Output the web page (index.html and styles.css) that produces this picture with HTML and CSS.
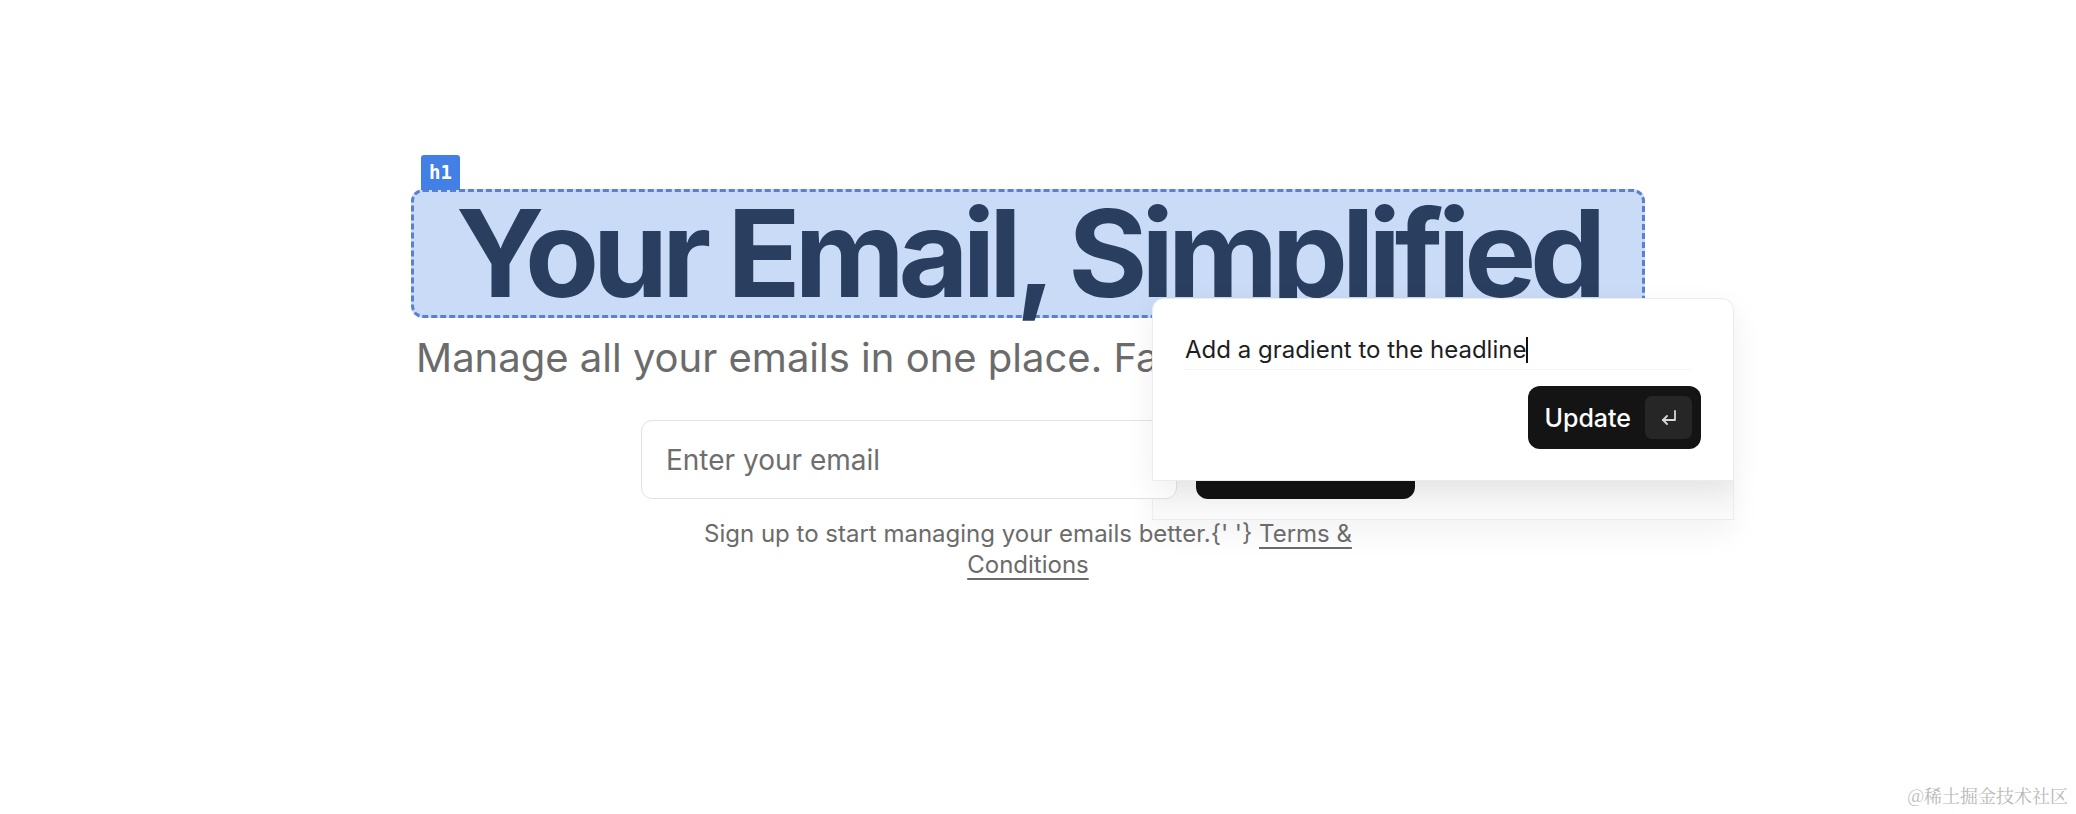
FILE: index.html
```html
<!DOCTYPE html>
<html lang="en">
<head>
<meta charset="utf-8">
<title>Your Email, Simplified</title>
<link rel="stylesheet" href="styles.css">
</head>
<body>
<div class="page">
  <main class="hero">
    <div class="h1-wrap">
      <span class="tag">h1</span>
      <h1 class="headline">Your Email, Simplified</h1>
    </div>
    <p class="subtitle">Manage all your emails in one place. Fast, secure, and easy.</p>
    <form class="signup">
      <input class="email" type="email" placeholder="Enter your email">
      <button class="subscribe" type="button">Get Started</button>
    </form>
    <p class="note">Sign up to start managing your emails better.{' '} <a href="#" class="terms">Terms &amp; Conditions</a></p>
  </main>

  <div class="ghost"></div>
  <div class="popup">
    <div class="prompt">Add a gradient to the headline<span class="caret"></span></div>
    <div class="actions">
      <button class="update" type="button">Update
        <span class="enter">
          <svg width="24" height="24" viewBox="0 0 24 24" fill="none" stroke="currentColor" stroke-width="1.8" stroke-linecap="round" stroke-linejoin="round"><polyline points="18,5 18,14 6,14"/><polyline points="10,10 6,14 10,18"/></svg>
        </span>
      </button>
    </div>
  </div>

  <div class="watermark">@稀土掘金技术社区</div>
</div>
</body>
</html>
```

FILE: styles.css
```css
* { box-sizing: border-box; }

html {
  margin: 0;
  padding: 0;
  background: #ffffff;
}

body {
  margin: 0;
  padding: 0;
  font-family: Inter, "Noto Sans", sans-serif;
  width: 2076px;
  height: 814px;
  overflow: hidden;
}

.page {
  position: relative;
  width: 2076px;
  height: 814px;
  padding: 189px 20px 0 0;
  display: flex;
  justify-content: center;
}

.hero {
  display: flex;
  flex-direction: column;
  align-items: center;
}

.h1-wrap {
  position: relative;
}

.tag {
  position: absolute;
  left: 10px;
  top: -34px;
  width: 39px;
  height: 35px;
  background: #4280e6;
  color: #ffffff;
  border-radius: 3px 3px 0 0;
  font-family: "DejaVu Sans Mono", monospace;
  font-weight: bold;
  font-size: 19px;
  line-height: 35px;
  text-align: center;
}

.headline {
  margin: 0;
  padding: 1px 42px;
  border: 3px dashed #5d7fcf;
  border-radius: 12px;
  background: #c9dbf6;
  color: #2a3e60;
  font-family: Inter, sans-serif;
  font-weight: 700;
  font-size: 121px;
  line-height: 1;
  letter-spacing: -0.052em;
  white-space: nowrap;
}

.subtitle {
  align-self: stretch;
  margin: 15px 0 0;
  padding-left: 5px;
  font-size: 40px;
  line-height: 50px;
  color: #6b6b6b;
  white-space: nowrap;
}

.signup {
  display: flex;
  gap: 19px;
  margin-top: 37px;
}

.email {
  width: 536px;
  height: 79px;
  border: 1.5px solid #e2e2e2;
  border-radius: 11px;
  padding: 0 24px;
  font-family: Inter, sans-serif;
  font-size: 28px;
  color: #333;
  background: #fff;
  outline: none;
}

.email::placeholder {
  color: #6e6e6e;
}

.subscribe {
  width: 219px;
  height: 79px;
  border: none;
  border-radius: 12px;
  background: #121212;
  color: #fff;
  font-family: Inter, sans-serif;
  font-size: 27px;
  font-weight: 500;
}

.note {
  margin: 19px 0 0;
  width: 700px;
  text-align: center;
  font-size: 24px;
  line-height: 31px;
  color: #6b6b6b;
}

.terms {
  color: #6b6b6b;
  text-decoration: underline;
  text-decoration-thickness: 2px;
  text-underline-offset: 5px;
}

.popup {
  position: absolute;
  left: 1152px;
  top: 298px;
  width: 582px;
  height: 183px;
  background: #ffffff;
  border: 1px solid #ececec;
  border-radius: 12px 12px 0 0;
  box-shadow: 0 10px 30px rgba(0, 0, 0, 0.07);
  padding: 36px 32px 0 32px;
}

.ghost {
  position: absolute;
  z-index: -1;
  left: 1152px;
  top: 470px;
  width: 582px;
  height: 50px;
  border-left: 1px solid #ededed;
  border-right: 1px solid #ededed;
  border-bottom: 1.5px solid #ebebeb;
  background: linear-gradient(to bottom, #f3f3f3, #fafafa);
  box-shadow: 0 14px 30px rgba(0, 0, 0, 0.05);
}

.prompt {
  font-size: 24px;
  line-height: 30px;
  color: #1e1e1e;
  padding-bottom: 4px;
  border-bottom: 1px solid #f4f4f4;
  margin-right: 10px;
}

.caret {
  display: inline-block;
  width: 1.5px;
  height: 26px;
  background: #111;
  vertical-align: -5px;
}

.actions {
  display: flex;
  justify-content: flex-end;
  margin-top: 16px;
}

.update {
  display: flex;
  align-items: center;
  gap: 14px;
  height: 63px;
  padding: 0 9px 0 16px;
  border: none;
  border-radius: 12px;
  background: #141414;
  color: #fff;
  font-family: Inter, sans-serif;
  font-size: 25px;
  font-weight: 500;
}

.enter {
  display: flex;
  align-items: center;
  justify-content: center;
  width: 47px;
  height: 43px;
  border-radius: 7px;
  background: #262626;
  color: #d8d8d8;
}

.watermark {
  position: absolute;
  right: 8px;
  bottom: 6px;
  font-family: "Noto Serif CJK SC", "Noto Sans CJK SC", serif;
  font-size: 18px;
  color: #b8b8b8;
}
```
